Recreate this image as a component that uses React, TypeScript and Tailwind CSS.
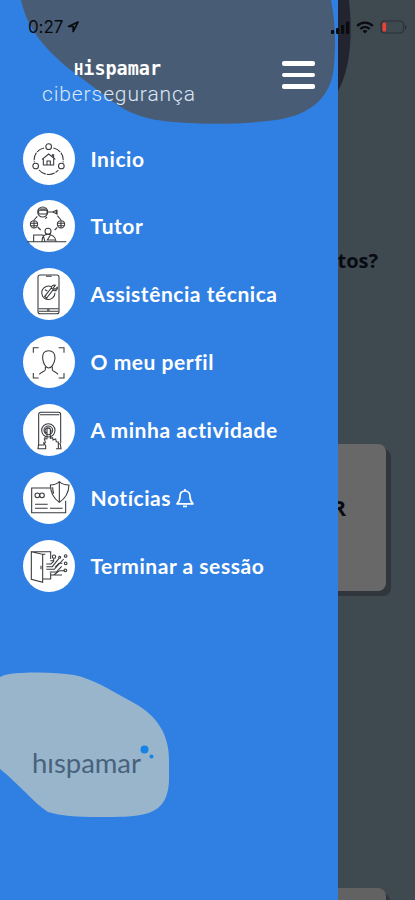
import type { ReactNode } from 'react';

interface MenuItem {
  label: string;
  icon: ReactNode;
  bell?: boolean;
}

const homeIcon = (
  <>
    <path d="M63 45a36 36 0 0 0-29 43M91 45a36 36 0 0 1 29 43M48 111a38 38 0 0 0 58 0" strokeDasharray="24 3" />
    <circle cx="77" cy="41" r="8.5" />
    <circle cx="38" cy="99" r="8.5" />
    <circle cx="115" cy="99" r="8.5" />
    <path d="M57 79 77 63l20 16M61 77v19h31V77M72 96V84h10v12M88 70v-5h4v9" />
  </>
);

const tutorIcon = (
  <>
    <circle cx="59" cy="36" r="15" />
    <path d="M47 31h25v11H47zM50 27h19M74 36h15M89 36l11-5v10zM102 29v15" />
    <circle cx="33" cy="73" r="11" />
    <circle cx="114" cy="73" r="11" />
    <path d="M23 70h20M24 77h18M33 62v22M104 70h20M105 77h18M114 62v22" />
    <path d="M43 49 33 60M103 47l11 13M44 81l9 9M103 82l-8 8M72 51l-5 5" />
    <circle cx="75" cy="94" r="9" />
    <path d="M57 124c0-14 7-21 18-21s23 7 24 21M32 105h28l6 20H32zM12 125h118M82 106l-9 14h24" />
  </>
);

const supportIcon = (
  <>
    <rect x="45" y="21" width="63" height="116" rx="6" />
    <path d="M47 122h60M47 130h60M69 25h17M72 126h8" />
    <path d="M86 57a20 20 0 1 0 10 17M65 85l20-25 6 5-20 25zM85 60c0-6 6-10 12-8l-6 8 5 4 7-6c2 8-6 12-12 9M66 65l7 4M65 85l5-4" />
  </>
);

const profileIcon = (
  <>
    <path d="M31 50V35h16M107 35h16v15M123 111v15h-16M47 126H31v-15" />
    <path d="M77 44c-13 0-20 9-18 24 2 16 10 28 18 28s17-12 19-28c1-15-6-24-19-24zM67 92v9c0 5-13 7-18 14M88 92v9c0 5 12 7 17 14" />
  </>
);

const activityIcon = (
  <>
    <path d="M47 119V32c0-5 3-7 7-7h53c4 0 6 2 6 7v86M51 32h58" />
    <circle cx="76" cy="79" r="20" />
    <circle cx="76" cy="79" r="13" />
    <path d="M72 76c0-6 10-6 10 0v27l7-2 1 7 8-3 2 8 6 1v20M72 76v28l-8 1 3 10-5 7M70 87c-8-5-3-17 6-15s9 11 7 14" />
    <path d="M47 119l-2 15h23v-9l-7-10M48 123h15M105 119l7 1 2 14H99M66 105v-7" />
  </>
);

const newsIcon = (
  <>
    <path d="M85 48H26v74h102V86" />
    <circle cx="43" cy="70" r="7" />
    <circle cx="57" cy="70" r="7" />
    <path d="M36 97h38M36 109h38M81 109h38" />
    <path d="M109 29c-8 8-17 10-27 10 1 22 9 40 27 52 19-12 28-30 29-52-12 0-21-2-29-10zM109 29v62M92 65c-2-6-3-12-3-19" />
  </>
);

const logoutIcon = (
  <>
    <path d="M25 35v83l34 9V43zM25 35h58v22M59 43h8M68 117h15V98M59 117h9" />
    <path d="M54 77v11M82 62h10M82 105h35M70 72h14l8-8v-8M70 80h18l20-25M70 88h24l28-31M80 96h20l16-17M92 105l18-13h15M96 82l12-12h10" />
    <circle cx="93" cy="50" r="5" />
    <circle cx="110" cy="52" r="3" />
    <circle cx="128" cy="48" r="4" />
    <circle cx="128" cy="70" r="4" />
    <circle cx="127" cy="91" r="4" />
  </>
);

const menuItems: MenuItem[] = [
  { label: 'Inicio', icon: homeIcon },
  { label: 'Tutor', icon: tutorIcon },
  { label: 'Assistência técnica', icon: supportIcon },
  { label: 'O meu perfil', icon: profileIcon },
  { label: 'A minha actividade', icon: activityIcon },
  { label: 'Notícias', icon: newsIcon, bell: true },
  { label: 'Terminar a sessão', icon: logoutIcon }
];

function StatusBar() {
  return (
    <div className="absolute inset-x-0 top-0 z-20 flex items-center justify-between pt-[17px] pl-[28px] pr-[8px] text-[#080b10]">
      <div className="flex items-center gap-[4px]">
        <span className="font-['Inter',sans-serif] text-[17px] leading-[20px] tracking-[-0.1px]">0:27</span>
        <svg className="h-[12px] w-[12px]" viewBox="0 0 12 12" fill="none" stroke="currentColor" strokeWidth="1.7" strokeLinejoin="round">
          <path d="M11 1 1.5 5.5h4.7v5z" />
        </svg>
      </div>
      <div className="flex items-center gap-[6px]">
        <svg className="h-[13px] w-[19px]" viewBox="0 0 19 13" fill="currentColor">
          <rect x="0" y="9" width="3.2" height="4" rx="1" />
          <rect x="5" y="7" width="3.2" height="6" rx="1" />
          <rect x="10" y="4" width="3.2" height="9" rx="1" />
          <rect x="15" y="0.5" width="3.2" height="12.5" rx="1" />
        </svg>
        <svg className="h-[13px] w-[18px]" viewBox="0 0 18 13" fill="none" stroke="currentColor" strokeWidth="2.3">
          <path d="M1.2 5c4.4-4.5 11.2-4.5 15.6 0M4.3 8c2.8-2.6 6.6-2.6 9.4 0" />
          <path d="m6.6 10 2.4 2.6 2.4-2.6c-1.4-1.2-3.4-1.2-4.8 0z" fill="currentColor" stroke="none" />
        </svg>
        <svg className="h-[14px] w-[27px]" viewBox="0 0 27 14" fill="none">
          <rect x="1" y="1" width="22.5" height="12" rx="3.5" stroke="#2c3238" strokeWidth="1.2" />
          <path d="M25 5v4.5c1.8-.7 1.8-3.8 0-4.5z" fill="#22272c" />
          <rect x="2.5" y="2.5" width="3.6" height="9" rx="1.5" fill="#ef4135" />
        </svg>
      </div>
    </div>
  );
}

function DimmedPage() {
  return (
    <div className="flex h-full flex-col items-end bg-[#3f4950] font-['Open_Sans',sans-serif] font-bold text-[#080b12]">
      <svg className="h-[91px] w-[77px] shrink-0" viewBox="0 0 77 91">
        <path d="M0 0h11c4 37 1 69-11 91z" fill="#22252f" />
      </svg>
      <div className="mt-[156px] pr-[37px] text-[20px] leading-[28px]">¿Preparados para os retos?</div>
      <div className="mt-[169px] mr-[29px] flex h-[147px] w-[356px] shrink-0 items-start justify-end rounded-[8px] bg-[#686868] pt-[49px] pr-[40px] text-[22px] leading-[28px] shadow-[5px_5px_0_#31353c]">
        EMPEZAR
      </div>
      <div className="mt-[297px] mr-[29px] h-[12px] w-[356px] shrink-0 rounded-t-[8px] bg-[#626262] shadow-[4px_5px_0_#31353c]" />
    </div>
  );
}

function MenuHeader() {
  return (
    <header className="relative h-[132.500px] shrink-0">
      <svg className="absolute inset-0 h-[133px] w-[338px]" viewBox="0 0 338 133">
        <path d="M21 0c6 27 21 46 47 68l40 30c22 18 43 22 65 24 35 3 73 2 103-2 34-5 56-22 58-55 2-25 1-45-3-65z" fill="#485d75" />
      </svg>
      <div className="relative flex items-start justify-between pt-[54px] pl-[41px] pr-[23px]">
        <svg className="h-[60px] w-[160px] overflow-visible text-white" viewBox="0 0 160 60" fill="currentColor">
          <text x="33" y="20.500" fontSize="19" fontWeight="700" fontFamily="'DejaVu Sans Mono', monospace" textLength="87" lengthAdjust="spacingAndGlyphs">
            <tspan fontSize="16">H</tspan>ispamar
          </text>
          <text x="1" y="46.500" fontSize="21" fontWeight="300" fontFamily="Roboto, sans-serif" fill="#dbe7f5" textLength="153" lengthAdjust="spacing">cibersegurança</text>
        </svg>
        <button aria-label="Menu" className="mt-[7px] flex w-[33px] flex-col gap-[7px]">
          <span className="h-[4.6px] rounded-[2px] bg-white" />
          <span className="h-[4.6px] rounded-[2px] bg-white" />
          <span className="h-[4.6px] rounded-[2px] bg-white" />
        </button>
      </div>
    </header>
  );
}

export default function App() {
  return (
    <div className="relative h-[900px] w-[415px] overflow-hidden">
      <DimmedPage />

      {/* DRAWER */}
      <aside className="absolute inset-y-0 left-0 z-10 flex w-[338px] flex-col bg-[#3080e4]">
        <MenuHeader />

        <nav className="flex flex-col gap-[15.9px] pl-[22.5px]">
          {menuItems.map((item) => (
            <a key={item.label} className="flex h-[52px] items-center gap-[16px]">
              <span className="h-[52px] w-[52px] shrink-0 rounded-full bg-white">
                <svg className="h-[52px] w-[52px]" viewBox="0 0 156 156" fill="none" stroke="#37393d" strokeWidth="3.2">
                  {item.icon}
                </svg>
              </span>
              <span className="whitespace-nowrap font-['Lato',sans-serif] text-[21px] font-bold leading-[28px] tracking-[0.55px] text-white">
                {item.label}
              </span>
              {item.bell && (
                <svg className="-ml-[11px] h-[20px] w-[18px]" viewBox="0 0 18 20" fill="none" stroke="white" strokeWidth="1.7" strokeLinejoin="round">
                  <path d="M9 1v2M9 3C5.800 3 4 5.200 4 8.500c0 3.500-.8 5-3 7.300h16c-2.200-2.300-3-3.800-3-7.300C14 5.200 12.200 3 9 3zM7 18.300h4" />
                </svg>
              )}
            </a>
          ))}
        </nav>

        {/* BRAND */}
        <footer className="mt-auto mb-[82px]">
          <svg className="h-[146px] w-[171px]" viewBox="0 0 171 146">
            <path d="M0 5c6-3 13-4 22-4 20-1 38 0 52 2 20 4 38 16 60 28 24 13 35 33 35 56v22c-1 19-8 29-24 33-12 3-26 3-45 3-24 0-39-1-52-5C34 131 21 114 0 97z" fill="#98b5cc" />
            <text x="32" y="100.500" fontSize="27" fontFamily="Lato, sans-serif" fill="#48627c" textLength="109" lengthAdjust="spacingAndGlyphs">hıspamar</text>
            <circle cx="144.500" cy="77.500" r="4" fill="#1684e6" />
            <circle cx="151.500" cy="84.500" r="2" fill="#1684e6" />
          </svg>
        </footer>
      </aside>

      <StatusBar />
    </div>
  );
}
